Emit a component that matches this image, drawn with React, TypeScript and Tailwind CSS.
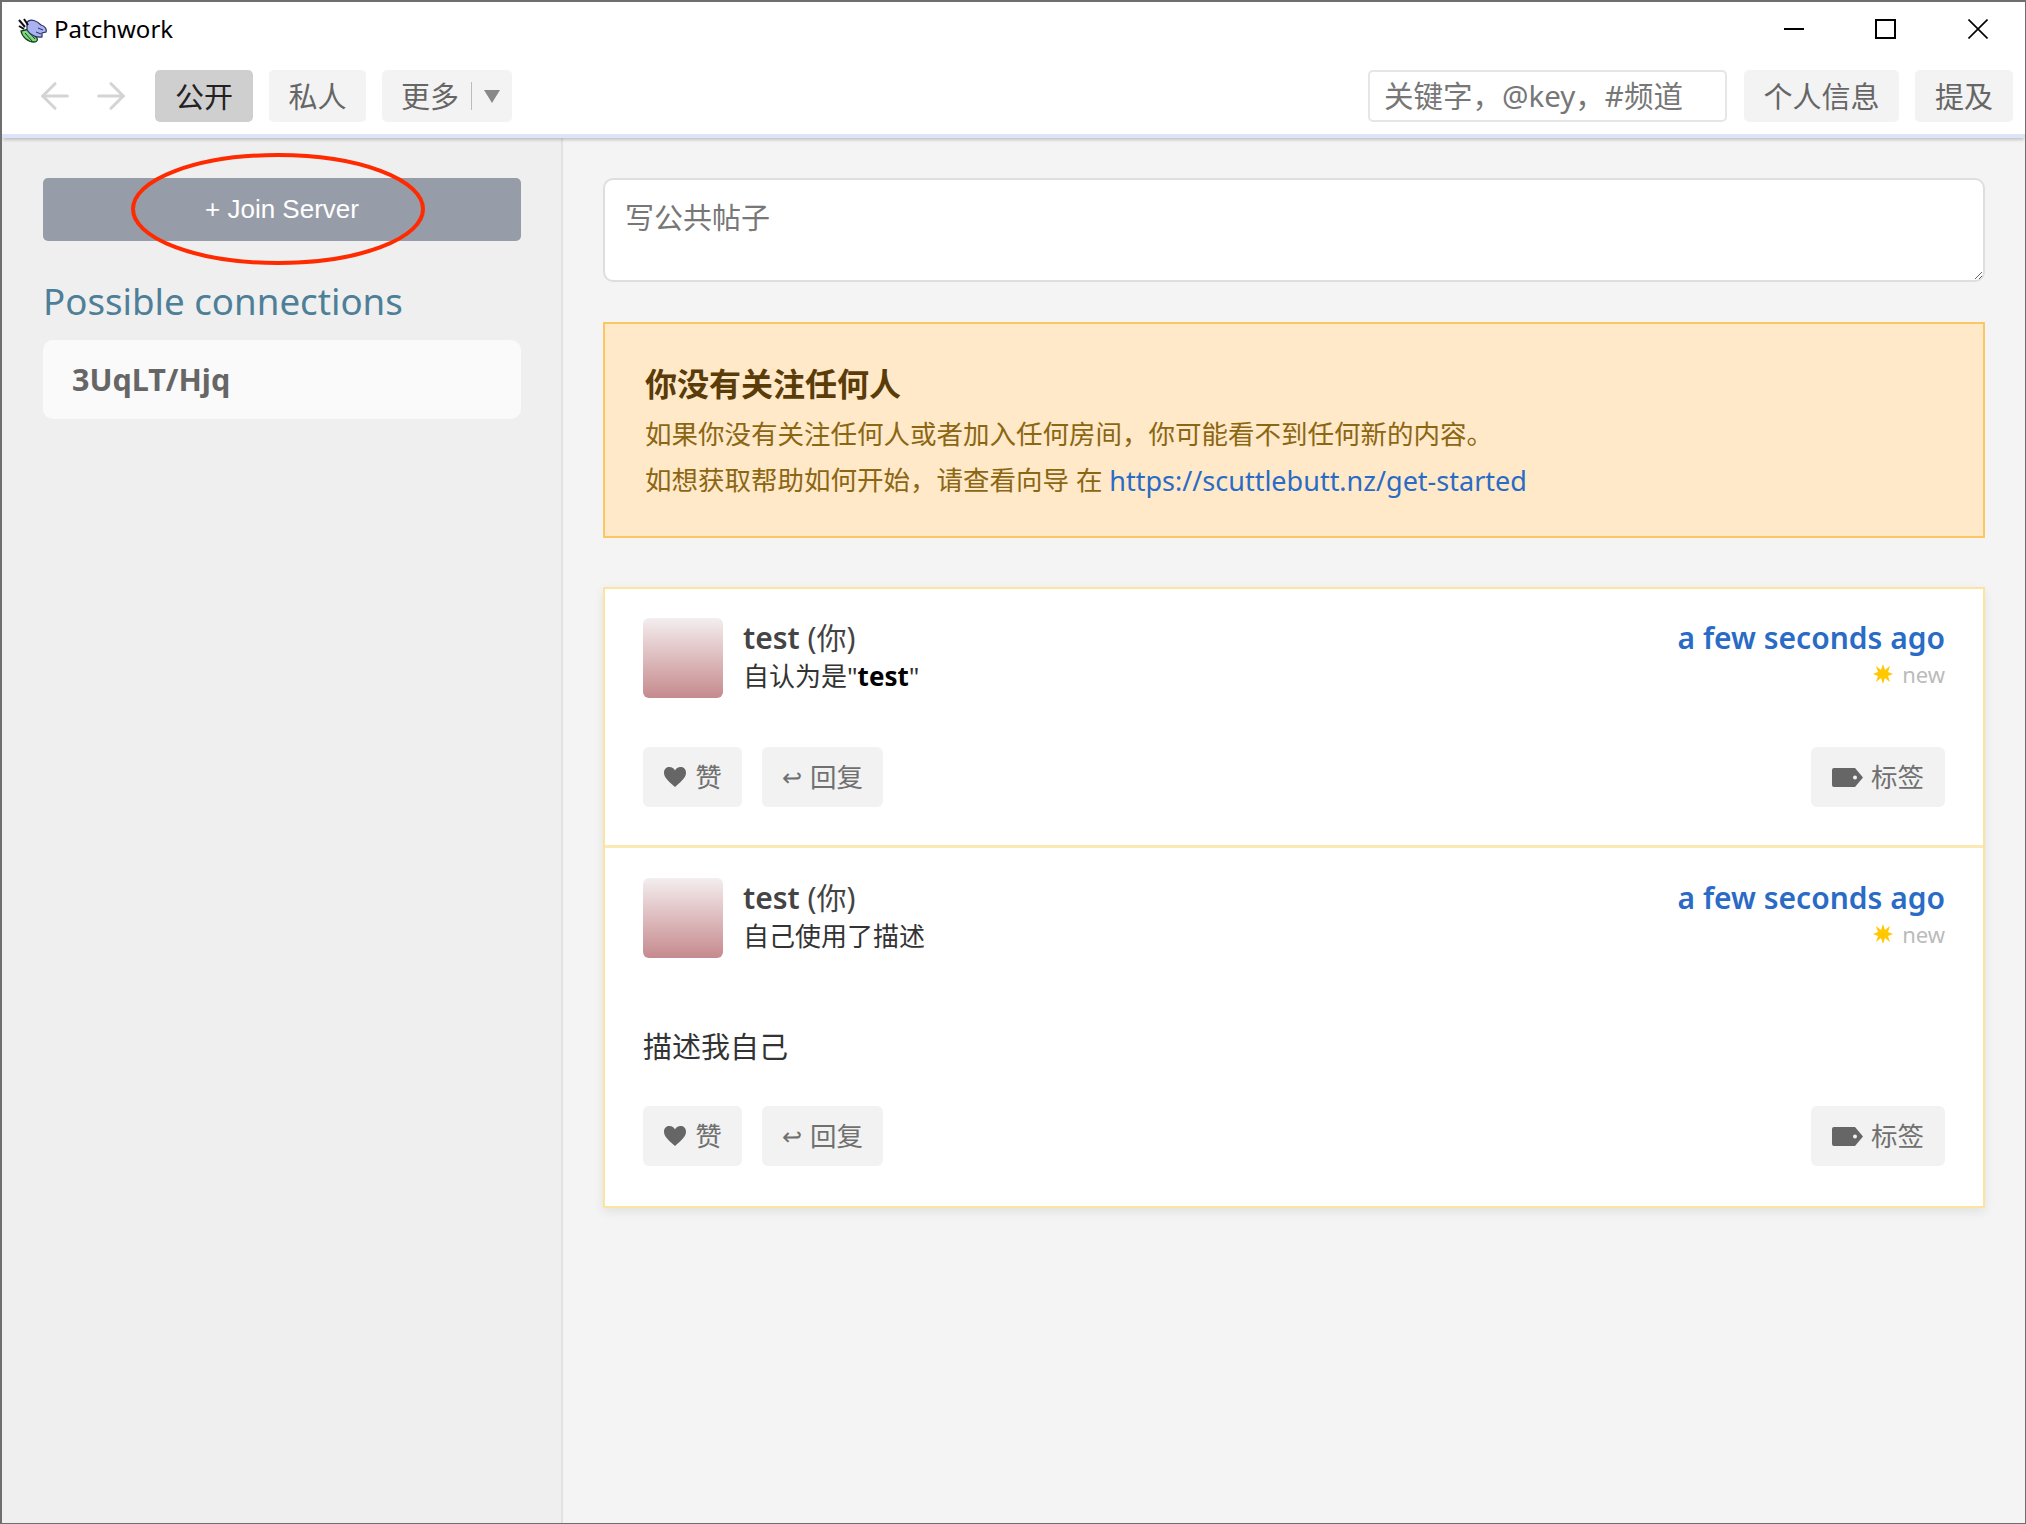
import { ArrowLeft, ArrowRight } from 'lucide-react';

const FONT = "font-['Noto_Sans','Noto_Sans_CJK_SC',sans-serif]";

const Logo = () => (
  <svg width="29" height="25" viewBox="0 0 29 25" className="mr-[7px] shrink-0">
    <path d="M3 13 C4 19 10 24 16 24 C19 24 20 22 19 20 L11 11 Z" fill="#7fd87f" stroke="#14401c" strokeWidth="1.300" />
    <path d="M7 15 L14 23 M10 13 L17 21" stroke="#14401c" strokeWidth="1" />
    <path d="M9 4 C13 0 19 3 23 7 C27 8 29 11 28 14 L24 15 L24 19 C19 20 12 17 9 12 Z" fill="#aab3f0" stroke="#2a3060" strokeWidth="1.200" />
    <path d="M20 10 L25 12 M18 14 L23 16" stroke="#2a3060" strokeWidth="1" />
    <path d="M1 2 L7 9 M6 1 L10 7 M1 8 L6 11" stroke="#111" strokeWidth="2" />
  </svg>
);

const NavButton = ({ children, active = false, w }: { children: React.ReactNode; active?: boolean; w: string }) => (
  <div
    className={`flex h-[52px] items-center justify-center rounded-[5px] text-[29px] leading-none ${w} ${
      active ? 'bg-[#cfcfcf] text-[#222]' : 'bg-[#f3f3f3] text-[#666]'
    }`}
  >
    {children}
  </div>
);

const ActionButton = ({ children, w }: { children: React.ReactNode; w: string }) => (
  <div className={`flex h-[60px] items-center justify-center gap-[8px] rounded-[6px] bg-[#f2f2f2] text-[26.500px] leading-none text-[#707070] ${w}`}>
    {children}
  </div>
);

const Heart = () => (
  <svg width="24" height="22" viewBox="0 0 24 22">
    <path d="M12 21 C4 14 1 11 1 6.500 C1 3 3.500 1 6.500 1 C9 1 11 2.500 12 4.500 C13 2.500 15 1 17.500 1 C20.500 1 23 3 23 6.500 C23 11 20 14 12 21 Z" fill="#666" />
  </svg>
);

const Tag = () => (
  <svg width="31" height="19" viewBox="0 0 31 19">
    <path d="M2 0 H23 L31 9.500 L23 19 H2 Q0 19 0 17 V2 Q0 0 2 0 Z" fill="#666" />
    <circle cx="23" cy="9.500" r="2" fill="#f2f2f2" />
  </svg>
);

const Burst = () => (
  <svg width="20" height="20" viewBox="0 0 20 20">
    <path
      d="M10 0 L12 6 L17 2 L15 8 L20 10 L15 12 L17 18 L12 14 L10 20 L8 14 L3 18 L5 12 L0 10 L5 8 L3 2 L8 6 Z"
      fill="#ffc800"
    />
  </svg>
);

const Message = ({ children, body, first = false }: { children: React.ReactNode; body?: string; first?: boolean }) => (
  <div className={first ? 'border-b-[3px] border-[#fbe9b4] px-[38px] pt-[29px] pb-[38px]' : 'px-[38px] pt-[30px] pb-[40px]'}>
    <div className="flex h-[80px]">
      <div className="h-[80px] w-[80px] rounded-[6px] bg-gradient-to-b from-[#f3eeef] to-[#c58a8e]" />
      <div className="ml-[20px] flex-1">
        <div className="flex h-[40px] items-center text-[30px] leading-none text-[#444]">
          <b className="font-semibold">test</b>&nbsp;(你)
        </div>
        <div className="flex h-[35px] items-center text-[26px] leading-none text-[#333]">{children}</div>
      </div>
      <div className="flex flex-col items-end">
        <div className="flex h-[40px] items-center text-[30px] leading-none font-semibold text-[#2a6bc6]">a few seconds ago</div>
        <div className="flex h-[31px] items-center gap-[9px] text-[22px] leading-none text-[#bbb]">
          <Burst />
          new
        </div>
      </div>
    </div>
    {body ? (
      <div className="mt-[68px] flex h-[40px] items-center text-[29px] leading-none text-[#333]">{body}</div>
    ) : null}
    <div className={`flex items-center gap-[20px] ${body ? 'mt-[40px]' : 'mt-[49px]'}`}>
      <ActionButton w="w-[99px]">
        <Heart />
        赞
      </ActionButton>
      <ActionButton w="w-[121px]">
        <span className="text-[24px]">↩</span>
        回复
      </ActionButton>
      <div className="flex-1" />
      <ActionButton w="w-[134px]">
        <Tag />
        标签
      </ActionButton>
    </div>
  </div>
);

export default function App() {
  return (
    <div className={`${FONT} flex h-[1524px] w-[2026px] flex-col overflow-hidden border-t-2 border-r border-b border-l-2 border-[#6e6e6e] bg-white`}>
      {/* Title bar */}
      <div className="flex h-[56px] shrink-0 items-center bg-white pl-[16px]">
        <Logo />
        <span className="mb-[2px] text-[24px] leading-none text-black">Patchwork</span>
        <div className="flex-1" />
        <div className="mb-[2px] h-[2px] w-[20px] bg-black" />
        <div className="mb-[2px] ml-[71px] h-[20px] w-[21px] border-2 border-black" />
        <svg className="mr-[37px] mb-[2px] ml-[72px]" width="20" height="20" viewBox="0 0 20 20">
          <path d="M0.500 0.500 L19.500 19.500 M19.500 0.500 L0.500 19.500" stroke="#000" strokeWidth="1.600" fill="none" />
        </svg>
      </div>

      {/* Nav */}
      <div className="z-10 flex h-[80px] shrink-0 items-start border-b-[4px] border-[#dbe5f7] bg-white pt-[12px] pr-[12px] pl-[32px] shadow-[0_3px_3px_-1px_rgba(0,0,0,0.2)]">
        <div className="flex h-[52px] w-[121px] items-center gap-[14px] text-[#d4d4d4]">
          <ArrowLeft className="h-[42px] w-[42px]" strokeWidth={1.800} />
          <ArrowRight className="h-[42px] w-[42px]" strokeWidth={1.800} />
        </div>
        <div className="flex gap-[16px]">
          <NavButton active w="w-[98px]">公开</NavButton>
          <NavButton w="w-[97px]">私人</NavButton>
          <NavButton w="w-[130px]">
            <span className="ml-[7px]">更多</span>
            <span className="mx-[12px] h-[28px] w-[1px] bg-[#bbb]" />
            <span className="h-0 w-0 border-x-[8px] border-t-[13px] border-x-transparent border-t-[#888]" />
          </NavButton>
        </div>
        <div className="flex-1" />
        <div className="flex h-[52px] w-[359px] items-center rounded-[5px] border-2 border-[#e6e6e6] bg-white pl-[14px] text-[29.500px] leading-none text-[#777]">
          关键字，@key，#频道
        </div>
        <div className="ml-[17px] flex gap-[16px]">
          <NavButton w="w-[155px]">个人信息</NavButton>
          <NavButton w="w-[98px]">提及</NavButton>
        </div>
      </div>

      {/* Body */}
      <div className="flex min-h-0 flex-1">
        <aside className="w-[561px] shrink-0 border-r-2 border-[#e2e2e2] bg-[#efefef] pt-[40px] pr-[40px] pl-[41px]">
          <div className="relative">
            <div className="flex h-[63px] items-center justify-center rounded-[5px] bg-[#979da8] pb-[2px] font-['Liberation_Sans',sans-serif] text-[26px] leading-none text-white">
              + Join Server
            </div>
            {/* red circle drawn over the screenshot */}
            <svg className="absolute top-[-26px] left-[87px]" width="296" height="114" viewBox="0 0 296 114">
              <ellipse cx="148" cy="57" rx="145" ry="54" fill="none" stroke="#ff2a00" strokeWidth="4" />
            </svg>
          </div>
          <div className="mt-[35px] flex h-[50px] items-center text-[36.700px] leading-none text-[#4e7f98]">Possible connections</div>
          <div className="mt-[14px] flex h-[79px] items-center rounded-[10px] bg-[#fafafa] pl-[29px] text-[30.500px] leading-none font-bold text-[#666]">
            3UqLT/Hjq
          </div>
        </aside>

        <main className="flex-1 bg-[#f4f4f4] pt-[40px] pr-[40px] pl-[40px]">
          <textarea
            readOnly
            placeholder="写公共帖子"
            className="block h-[104px] w-full resize rounded-[10px] border-2 border-[#dedede] bg-white px-[20px] py-[18px] text-[29px] leading-[40px] text-[#777] outline-none placeholder:text-[#777]"
          />
          <div className="mt-[40px] flex h-[216px] flex-col border-2 border-[#fcc663] bg-[#ffe9c8] pt-[40px] pl-[40px]">
            <h3 className="flex h-[40px] items-center text-[32px] leading-none font-bold text-[#5a3c08]">你没有关注任何人</h3>
            <p className="mt-[10px] flex h-[40px] items-center text-[26.500px] leading-none text-[#8b6613]">
              如果你没有关注任何人或者加入任何房间，你可能看不到任何新的内容。
            </p>
            <p className="mt-[6px] flex h-[40px] items-center text-[26.500px] leading-none text-[#8b6613]">
              如想获取帮助如何开始，请查看向导 在&nbsp;<span className="text-[27px] text-[#2a6bc6]">https://scuttlebutt.nz/get-started</span>
            </p>
          </div>
          <div className="mt-[49px] border-2 border-[#fbe49f] bg-white shadow-[0_4px_10px_rgba(0,0,0,0.08)]">
            <Message first>
              自认为是&quot;<b className="font-bold text-black">test</b>&quot;
            </Message>
            <Message body="描述我自己">自己使用了描述</Message>
          </div>
        </main>
      </div>
    </div>
  );
}
